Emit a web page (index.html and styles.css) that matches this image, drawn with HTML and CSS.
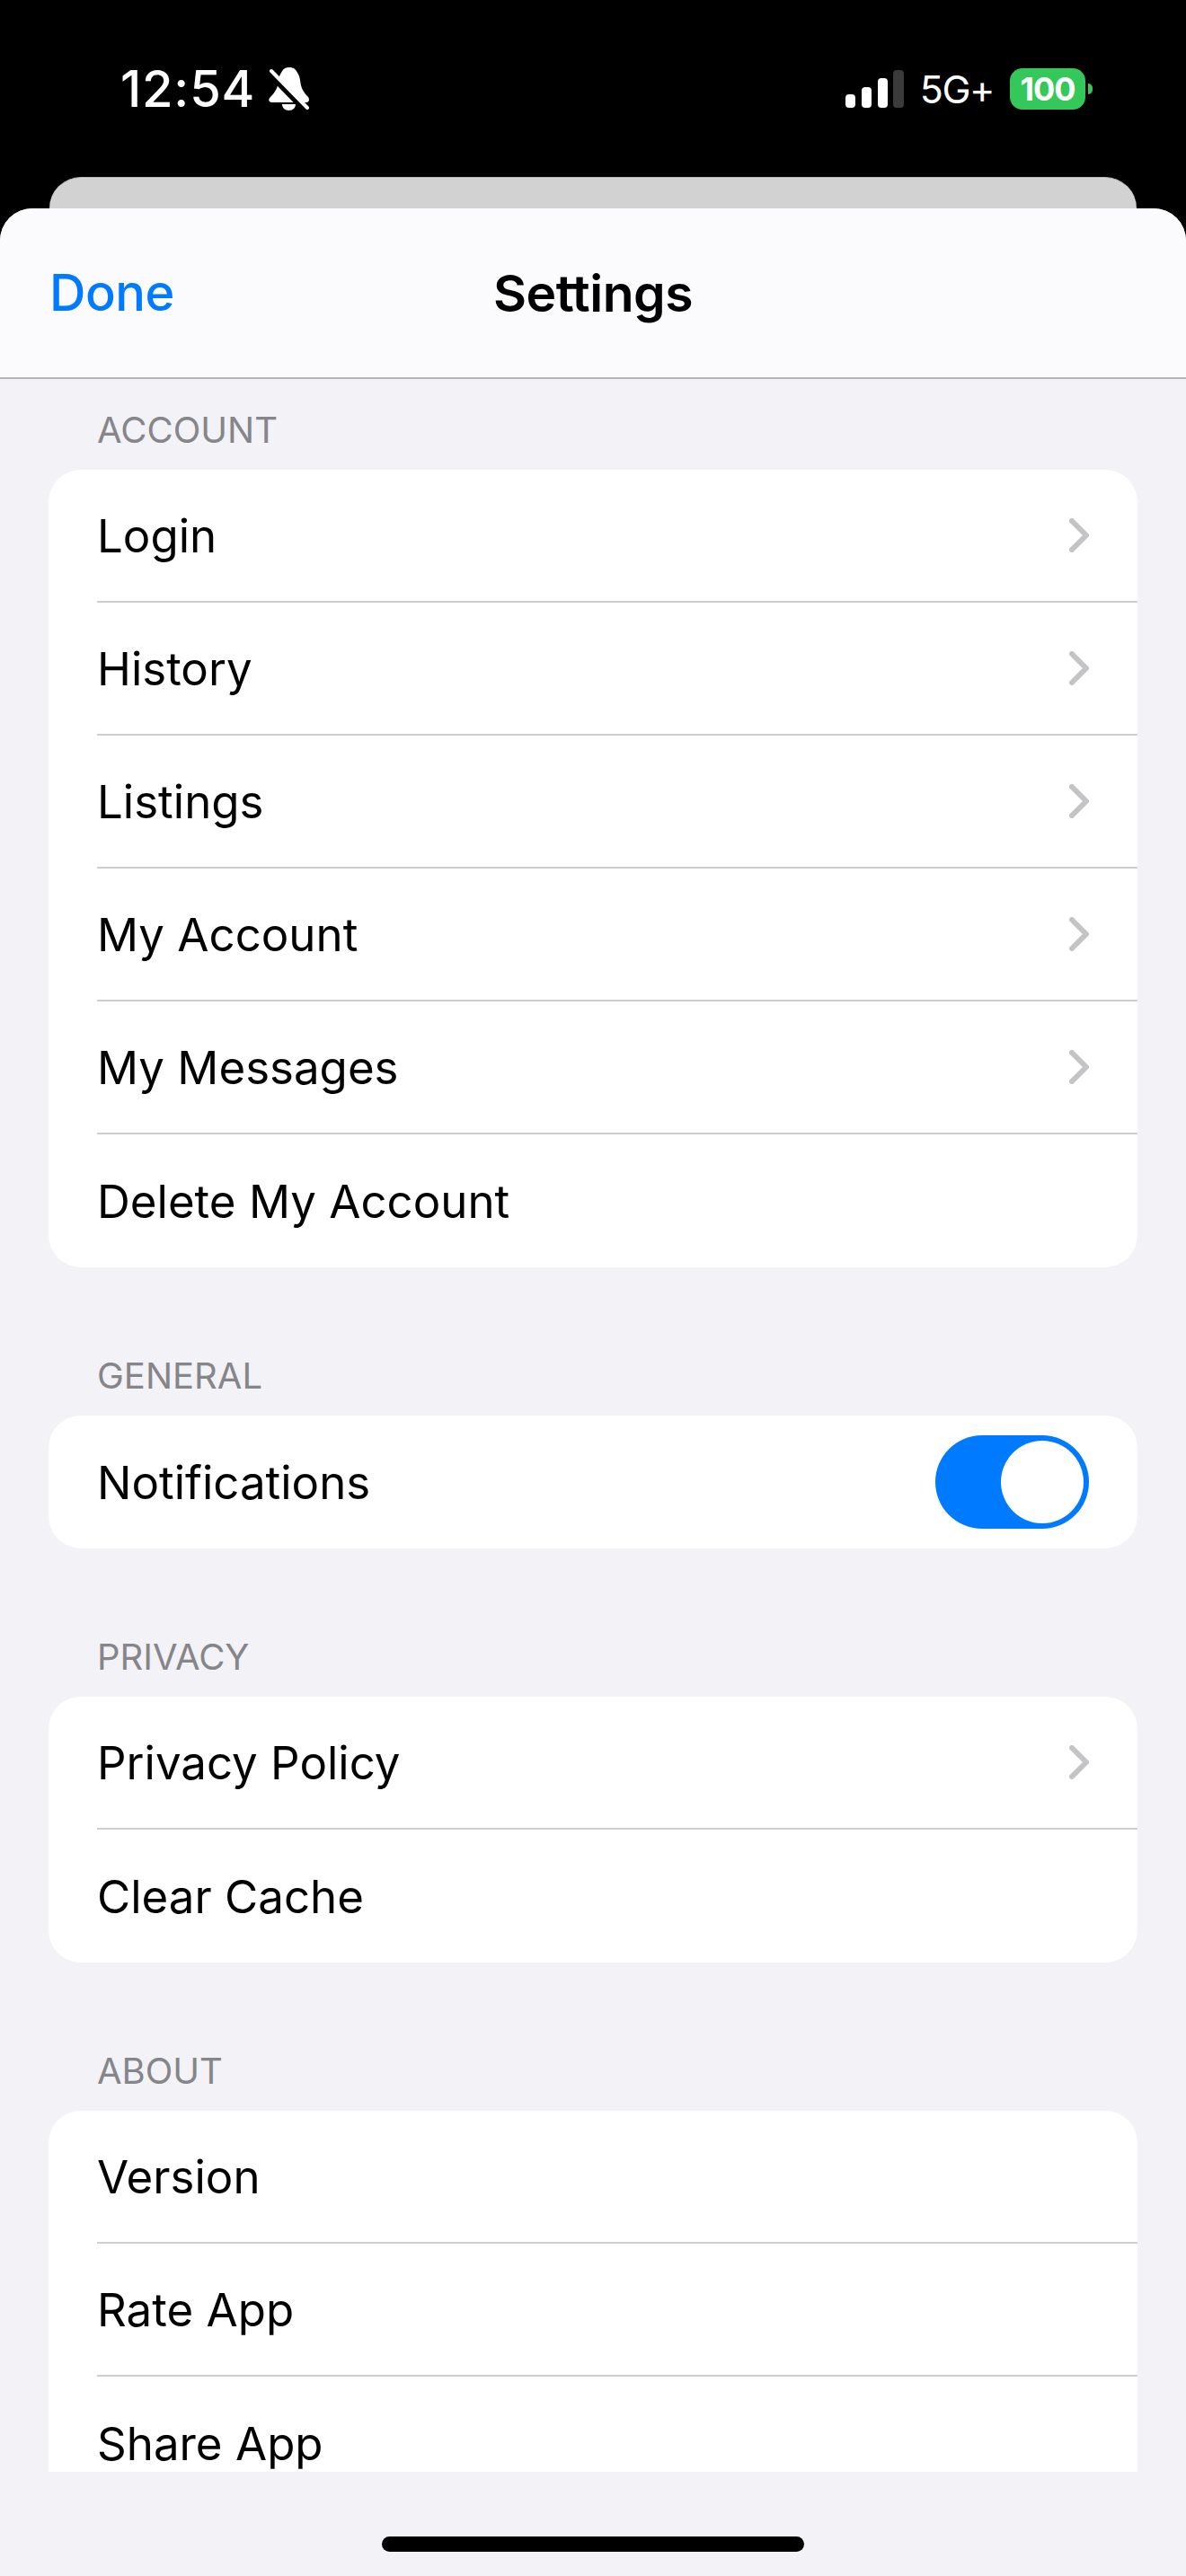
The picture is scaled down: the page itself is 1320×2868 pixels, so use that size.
FILE: index.html
```html
<!DOCTYPE html>
<html lang="en">
<head>
  <meta charset="UTF-8">
  <title>Settings</title>
  <link rel="stylesheet" href="styles.css">
</head>
<body>
  <div class="telefone">
    <header class="status">
      <div class="status-esq">
        <span class="hora">12:54</span>
        <svg class="sino" width="45" height="48" viewBox="0 0 45 48">
          <path d="M23 0c-5 0-7 2-9 6-3 4-3 9-4 14-1 5-5 10-8 13-3 3-2 6 2 6h37c4 0 5-3 3-6-3-3-7-8-8-13-1-5-1-10-4-14-2-4-4-6-9-6z" fill="#fff"/>
          <path d="M15 41h15c0 4-3 7-7.500 7S15 45 15 41z" fill="#fff"/>
          <path d="M1 6l39 40" stroke="#000" stroke-width="8"/>
          <path d="M3 4l40 41" stroke="#fff" stroke-width="4" stroke-linecap="round"/>
        </svg>
      </div>
      <div class="status-dir">
        <svg width="66" height="42" viewBox="0 0 66 42">
          <rect x="1" y="27" width="11" height="15" rx="4" fill="#fff"/>
          <rect x="19" y="19" width="11" height="23" rx="4" fill="#fff"/>
          <rect x="37" y="9" width="11" height="33" rx="4" fill="#fff"/>
          <rect x="54" y="0" width="12" height="42" rx="4" fill="#3a3a3a"/>
        </svg>
        <span class="rede">5G+</span>
        <div class="bateria">
          <span class="bateria-corpo">100</span>
          <span class="bateria-ponta"></span>
        </div>
      </div>
    </header>

    <div class="folha-atras"></div>

    <div class="folha">
      <nav class="barra">
        <a class="pronto">Done</a>
        <h1>Settings</h1>
        <span></span>
      </nav>

      <main class="lista">
        <section class="grupo">
          <h2>ACCOUNT</h2>
          <ul class="cartao">
            <li>Login <svg class="seta" width="22" height="38" viewBox="0 0 22 38"><path d="M3 3l16 16L3 35" fill="none" stroke="#c4c4c7" stroke-width="6" stroke-linecap="round" stroke-linejoin="round"/></svg></li>
            <li>History <svg class="seta" width="22" height="38" viewBox="0 0 22 38"><path d="M3 3l16 16L3 35" fill="none" stroke="#c4c4c7" stroke-width="6" stroke-linecap="round" stroke-linejoin="round"/></svg></li>
            <li>Listings <svg class="seta" width="22" height="38" viewBox="0 0 22 38"><path d="M3 3l16 16L3 35" fill="none" stroke="#c4c4c7" stroke-width="6" stroke-linecap="round" stroke-linejoin="round"/></svg></li>
            <li>My Account <svg class="seta" width="22" height="38" viewBox="0 0 22 38"><path d="M3 3l16 16L3 35" fill="none" stroke="#c4c4c7" stroke-width="6" stroke-linecap="round" stroke-linejoin="round"/></svg></li>
            <li>My Messages <svg class="seta" width="22" height="38" viewBox="0 0 22 38"><path d="M3 3l16 16L3 35" fill="none" stroke="#c4c4c7" stroke-width="6" stroke-linecap="round" stroke-linejoin="round"/></svg></li>
            <li>Delete My Account</li>
          </ul>
        </section>

        <section class="grupo">
          <h2>GENERAL</h2>
          <ul class="cartao">
            <li>Notifications <span class="chave"><span class="bolinha"></span></span></li>
          </ul>
        </section>

        <section class="grupo">
          <h2>PRIVACY</h2>
          <ul class="cartao">
            <li>Privacy Policy <svg class="seta" width="22" height="38" viewBox="0 0 22 38"><path d="M3 3l16 16L3 35" fill="none" stroke="#c4c4c7" stroke-width="6" stroke-linecap="round" stroke-linejoin="round"/></svg></li>
            <li>Clear Cache</li>
          </ul>
        </section>

        <section class="grupo">
          <h2>ABOUT</h2>
          <ul class="cartao">
            <li>Version</li>
            <li>Rate App</li>
            <li>Share App</li>
          </ul>
        </section>
      </main>

      <footer class="rodape">
        <div class="indicador"></div>
      </footer>
    </div>
  </div>
</body>
</html>
```

FILE: styles.css
```css
* {
  box-sizing: border-box;
}

html, body {
  margin: 0;
  padding: 0;
}

body {
  background-color: #000;
  font-family: Inter, "Liberation Sans", sans-serif;
  color: #000;
}

.telefone {
  width: 1320px;
  height: 2868px;
  display: flex;
  flex-direction: column;
  overflow: hidden;
}

/* barra de status */
.status {
  height: 197px;
  flex: none;
  display: flex;
  justify-content: space-between;
  align-items: center;
  padding: 0 104px 0 134px;
  color: #fff;
}

.status-esq {
  display: flex;
  align-items: center;
  gap: 15px;
}

.hora {
  font-size: 56px;
  font-weight: 500;
  line-height: 60px;
  letter-spacing: 0.8px;
}

.status-dir {
  display: flex;
  align-items: center;
}

.rede {
  font-size: 43px;
  line-height: 46px;
  margin-left: 18px;
  margin-right: 18px;
  letter-spacing: -1.5px;
}

.bateria {
  display: flex;
  align-items: center;
  gap: 3px;
}

.bateria-corpo {
  width: 84px;
  height: 46px;
  background: #34c759;
  border-radius: 14px;
  font-size: 36px;
  font-weight: 700;
  line-height: 46px;
  text-align: center;
  letter-spacing: -1px;
}

.bateria-ponta {
  width: 5px;
  height: 12px;
  background: #34c759;
  border-radius: 0 6px 6px 0;
}

/* folhas */
.folha-atras {
  height: 35px;
  flex: none;
  margin: 0 55px;
  background: #d2d2d2;
  border-top: 1px solid #bcbcbc;
  border-radius: 36px 36px 0 0;
}

.folha {
  flex: 1;
  min-height: 0;
  display: flex;
  flex-direction: column;
  background: #f2f2f7;
  border-radius: 36px 36px 0 0;
  overflow: hidden;
}

.barra {
  height: 190px;
  flex: none;
  display: grid;
  grid-template-columns: 1fr auto 1fr;
  align-items: center;
  padding: 0 55px;
  background: #fbfbfd;
  border-bottom: 2px solid #b4b4b8;
}

.pronto {
  font-size: 56px;
  font-weight: 500;
  color: #007aff;
  letter-spacing: -0.5px;
}

.barra h1 {
  margin: 0;
  font-size: 57px;
  font-weight: 600;
  letter-spacing: -0.5px;
}

/* lista */
.lista {
  flex: 1;
  min-height: 0;
  overflow: hidden;
  padding: 34px 54px 0;
  display: flex;
  flex-direction: column;
  gap: 98px;
}

.grupo {
  flex: none;
}

.grupo h2 {
  margin: 0 0 21px;
  padding-left: 54px;
  font-size: 40px;
  font-weight: 400;
  line-height: 46px;
  color: #85858a;
}

.cartao {
  list-style: none;
  margin: 0;
  padding: 0;
  background: #fff;
  border-radius: 36px;
  overflow: hidden;
}

.cartao li {
  height: 148px;
  margin-left: 54px;
  padding-right: 54px;
  display: flex;
  justify-content: space-between;
  align-items: center;
  font-size: 51px;
  border-bottom: 2px solid #cfcfd1;
}

.cartao li:last-child {
  border-bottom: none;
}

.chave {
  width: 171px;
  height: 104px;
  padding: 6px;
  display: flex;
  justify-content: flex-end;
  background: #007aff;
  border-radius: 52px;
}

.bolinha {
  width: 92px;
  height: 92px;
  background: #fff;
  border-radius: 50%;
}

.rodape {
  height: 116px;
  flex: none;
  padding-top: 72px;
}

.indicador {
  width: 470px;
  height: 17px;
  margin: 0 auto;
  background: #000;
  border-radius: 9px;
}
```
